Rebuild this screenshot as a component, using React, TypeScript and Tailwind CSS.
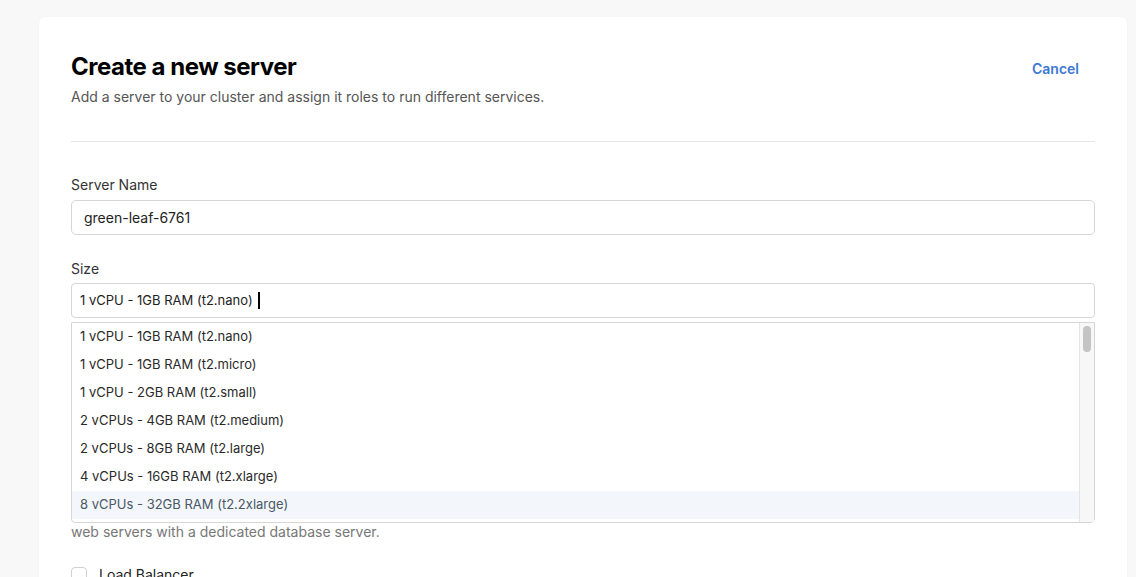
import { useState } from "react"

// Size options shown in the open dropdown
const sizes = [
  "1 vCPU - 1GB RAM (t2.nano)",
  "1 vCPU - 1GB RAM (t2.micro)",
  "1 vCPU - 2GB RAM (t2.small)",
  "2 vCPUs - 4GB RAM (t2.medium)",
  "2 vCPUs - 8GB RAM (t2.large)",
  "4 vCPUs - 16GB RAM (t2.xlarge)",
  "8 vCPUs - 32GB RAM (t2.2xlarge)",
]

export default function App() {
  const [name, setName] = useState("green-leaf-6761")
  const [active, setActive] = useState(6)

  return (
    <div className="min-h-screen bg-[#f8f8f8] pl-[39px] pr-[9px] pt-[17px] font-['Inter',sans-serif]">
      <div className="rounded-md bg-white px-8 pt-[34px] pb-10 shadow-[0_0_2px_rgba(0,0,0,0.06)]">
        <div className="flex items-start justify-between">
          <div>
            <h1 className="text-2xl font-bold tracking-[-0.02em] text-black">Create a new server</h1>
            <p className="mt-1 text-sm text-[#555]">
              Add a server to your cluster and assign it roles to run different services.
            </p>
          </div>
          <button className="mt-[8px] px-4 text-sm font-semibold text-[#3d78d4]">Cancel</button>
        </div>

        <div className="mt-[34px] h-px bg-[#e6e6e6]" />

        <div className="mt-[33px]">
          <label className="block text-sm text-[#333]">Server Name</label>
          <input
            value={name}
            onChange={(e) => setName(e.target.value)}
            className="mt-[5px] block h-[35px] w-full rounded-[5px] border border-[#d6d6d6] px-3 text-sm text-[#222] outline-none"
          />
        </div>

        <div className="mt-[24px]">
          <label className="block text-sm text-[#333]">Size</label>
          <div className="relative mt-[4px]">
            <div className="flex h-[35px] items-center rounded-[4px] border border-[#d6d6d6] px-2 text-[13px] text-[#222]">
              <span>{sizes[0]}</span>
              <span className="ml-[5px] h-[17px] w-[2px] bg-black" />
            </div>

            {/* open dropdown over the content below */}
            <div className="absolute left-0 right-0 top-[39px] z-10 flex h-[201px] rounded-b-[4px] border border-[#d6d6d6] bg-white">
              <ul className="flex-1">
                {sizes.map((s, i) => (
                  <li
                    key={s}
                    onMouseEnter={() => setActive(i)}
                    className={`flex h-[28px] items-center px-2 text-[13px] ${i === active ? "bg-[#f3f7fb] text-[#4a5866]" : "text-[#2a2a2a]"}`}
                  >
                    {s}
                  </li>
                ))}
              </ul>
              <div className="w-[15px] border-l border-[#e4e4e4] bg-[#f7f7f7] px-[3px] pt-[3px]">
                <div className="h-[26px] rounded-full bg-[#c4c4c4]" />
              </div>
            </div>
          </div>
        </div>

        {/* roles section, mostly covered by the open dropdown */}
        <div className="mt-[204px]">
          <p className="text-sm leading-5 text-[#777]">web servers with a dedicated database server.</p>
          <label className="mt-[23px] flex items-center gap-3 text-sm text-[#222]">
            <span className="h-4 w-4 rounded-[4px] border border-[#cfcfcf]" />
            Load Balancer
          </label>
        </div>
      </div>
    </div>
  )
}
